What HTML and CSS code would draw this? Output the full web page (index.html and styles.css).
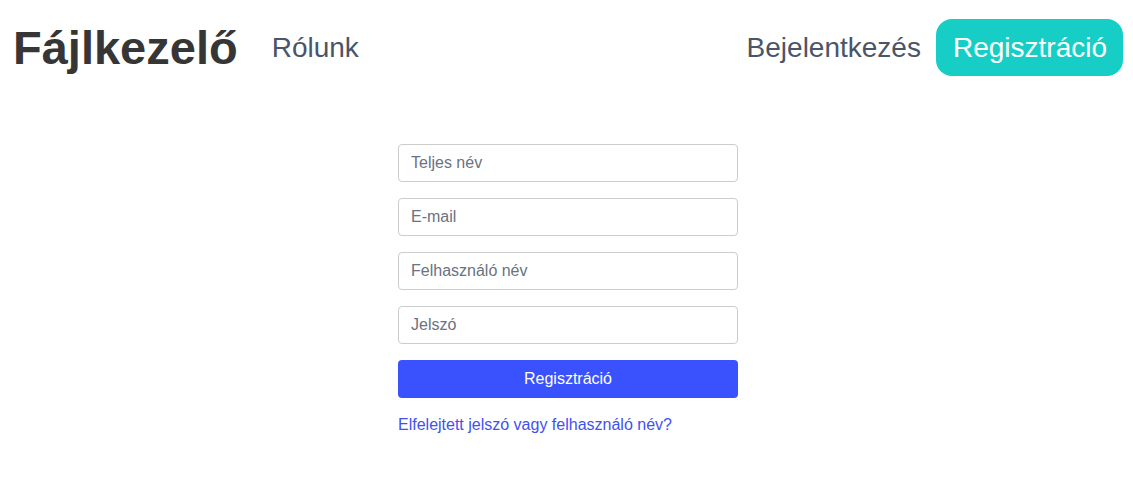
FILE: index.html
```html
<!DOCTYPE html>
<html lang="hu">
<head>
<meta charset="utf-8">
<title>Fájlkezelő</title>
<link rel="stylesheet" href="styles.css">
</head>
<body>
<header class="navbar">
  <div class="nav-left">
    <a class="brand" href="#">Fájlkezelő</a>
    <a class="nav-link" href="#">Rólunk</a>
  </div>
  <div class="nav-right">
    <a class="nav-link" href="#">Bejelentkezés</a>
    <a class="nav-button" href="#">Regisztráció</a>
  </div>
</header>
<main class="content">
  <form class="form">
    <input class="input" type="text" placeholder="Teljes név">
    <input class="input" type="email" placeholder="E-mail">
    <input class="input" type="text" placeholder="Felhasználó név">
    <input class="input" type="password" placeholder="Jelszó">
    <button class="submit" type="button">Regisztráció</button>
    <a class="forgot" href="#">Elfelejtett jelszó vagy felhasználó név?</a>
  </form>
</main>
</body>
</html>
```

FILE: styles.css
```css
* { box-sizing: border-box; }
body {
  margin: 0;
  font-family: "Liberation Sans", Arial, sans-serif;
  background: #fff;
  color: #363636;
}
a { text-decoration: none; }
.navbar {
  display: flex;
  justify-content: space-between;
  align-items: center;
  height: 95px;
  padding: 0 10px 0 13px;
}
.nav-left, .nav-right {
  display: flex;
  align-items: center;
}
.brand {
  font-size: 47px;
  font-weight: bold;
  color: #363636;
  margin-right: 34px;
}
.nav-link {
  font-size: 28px;
  color: #4a5568;
}
.nav-right .nav-link { margin-right: 15px; }
.nav-button {
  font-size: 28px;
  color: #fff;
  background: #17cec7;
  border-radius: 16px;
  height: 57px;
  padding: 0 16px 0 17px;
  display: flex;
  align-items: center;
}
.content {
  display: flex;
  justify-content: center;
  padding-top: 49px;
  padding-left: 3px;
}
.form {
  width: 340px;
  display: flex;
  flex-direction: column;
  gap: 16px;
}
.input {
  height: 38px;
  border: 1px solid #cccccc;
  border-radius: 4px;
  padding: 0 12px;
  font-family: inherit;
  font-size: 16px;
  color: #363636;
  outline: none;
}
.input::placeholder { color: #6b7280; }
.submit {
  height: 38px;
  border: none;
  border-radius: 4px;
  background: #3a52fe;
  color: #fff;
  font-family: inherit;
  font-size: 16px;
}
.forgot {
  margin-top: 2px;
  font-size: 16px;
  color: #3f51f5;
}
```
